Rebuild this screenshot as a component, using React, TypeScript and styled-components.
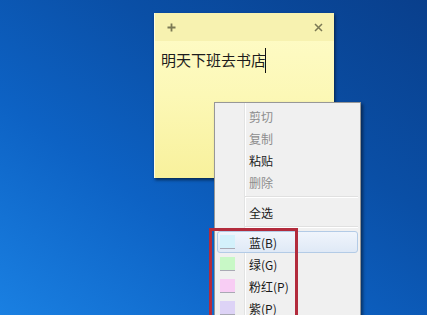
import React from 'react';
import styled, { createGlobalStyle } from 'styled-components';

const GlobalStyle = createGlobalStyle`
  html, body {
    margin: 0;
    padding: 0;
  }
  body {
    font-family: "Noto Sans CJK SC", "Noto Sans", sans-serif;
  }
`;

const Desktop = styled.div`
  position: relative;
  width: 427px;
  height: 315px;
  overflow: hidden;
  background: linear-gradient(35deg, #1a80e2 0%, #0d62c4 35%, #0a4fa6 65%, #093f8c 100%);
`;

// sticky note window, placed on the desktop
const Note = styled.div`
  position: absolute;
  left: 154px;
  top: 13px;
  width: 179px;
  height: 165px;
  display: flex;
  flex-direction: column;
  background: linear-gradient(to bottom, #fefcca 0%, #fcf8b6 50%, #f8f19c 100%);
  border-left: 1px solid #fffde0;
  box-shadow: 1px 2px 3px rgba(0, 0, 0, 0.55);
`;

const NoteHeader = styled.div`
  height: 28px;
  display: flex;
  align-items: center;
  justify-content: space-between;
  padding: 0 11px 0 12px;
  background: #f7f2b0;
  color: #7b7954;
`;

const NoteBody = styled.div`
  padding: 6px 6px;
  display: flex;
  align-items: center;
  font-size: 15px;
  line-height: 26px;
  color: #1c1c1c;
`;

const Caret = styled.span`
  display: inline-block;
  width: 1px;
  height: 25px;
  background: #111;
  margin-left: -1px;
`;

const Menu = styled.div`
  position: absolute;
  left: 214px;
  top: 102px;
  width: 141px;
  padding: 2px 2px;
  display: flex;
  flex-direction: column;
  border: 1px solid #979797;
  background: linear-gradient(
    to right,
    #f0f0f0 29px,
    #e2e3e3 29px,
    #e2e3e3 30px,
    #ffffff 30px,
    #ffffff 31px,
    #f0f0f0 31px
  );
  box-shadow: 2px 2px 3px rgba(0, 0, 0, 0.45);
`;

const Item = styled.div<{ $disabled?: boolean; $hover?: boolean }>`
  height: 22px;
  display: grid;
  grid-template-columns: 28px 1fr;
  align-items: center;
  box-sizing: border-box;
  font-size: 12px;
  color: ${(p) => (p.$disabled ? '#8d8d8d' : '#1a1a1a')};
  border: 1px solid ${(p) => (p.$hover ? '#b3cbe6' : 'transparent')};
  border-radius: 3px;
  background: ${(p) =>
    p.$hover ? 'linear-gradient(to bottom, #f0f5fc, #dfe9f6)' : 'transparent'};
`;

const Label = styled.span`
  padding-left: 3px;
  font-family: "Noto Sans CJK SC", "Noto Sans", sans-serif;
`;

const Swatch = styled.span<{ $color: string }>`
  width: 15px;
  height: 14px;
  margin-left: 2px;
  background: ${(p) => p.$color};
  border-bottom: 1px solid #a9a9b4;
  box-sizing: border-box;
`;

const Separator = styled.div`
  height: 1px;
  margin: 3px 0 3px 28px;
  background: #e0e0e0;
  border-bottom: 1px solid #ffffff;
`;

const Highlight = styled.div`
  position: absolute;
  left: 209px;
  top: 228px;
  width: 83px;
  height: 100px;
  border: 3px solid #b22b3c;
`;

const PlusIcon = () => (
  <svg width="9" height="9" viewBox="0 0 9 9">
    <path d="M4.5 0.5v8M0.5 4.5h8" stroke="currentColor" strokeWidth="1.8" />
  </svg>
);

const CloseIcon = () => (
  <svg width="9" height="9" viewBox="0 0 9 9">
    <path d="M1 1l7 7M8 1l-7 7" stroke="currentColor" strokeWidth="1.5" />
  </svg>
);

const colours = [
  { label: '蓝(B)', color: '#d3f1fb', hover: true },
  { label: '绿(G)', color: '#c8f8c6' },
  { label: '粉红(P)', color: '#f8cdf4' },
  { label: '紫(P)', color: '#ddd3f6' },
];

const App = () => {
  return (
    <>
      <GlobalStyle />
      <Desktop>
        <Note>
          <NoteHeader>
            <PlusIcon />
            <CloseIcon />
          </NoteHeader>
          <NoteBody>
            明天下班去书店
            <Caret />
          </NoteBody>
        </Note>
        <Menu>
          <Item $disabled>
            <span />
            <Label>剪切</Label>
          </Item>
          <Item $disabled>
            <span />
            <Label>复制</Label>
          </Item>
          <Item>
            <span />
            <Label>粘贴</Label>
          </Item>
          <Item $disabled>
            <span />
            <Label>删除</Label>
          </Item>
          <Separator />
          <Item>
            <span />
            <Label>全选</Label>
          </Item>
          <Separator />
          {colours.map((c) => (
            <Item key={c.label} $hover={c.hover}>
              <Swatch $color={c.color} />
              <Label>{c.label}</Label>
            </Item>
          ))}
        </Menu>
        <Highlight />
      </Desktop>
    </>
  );
};

export default App;
